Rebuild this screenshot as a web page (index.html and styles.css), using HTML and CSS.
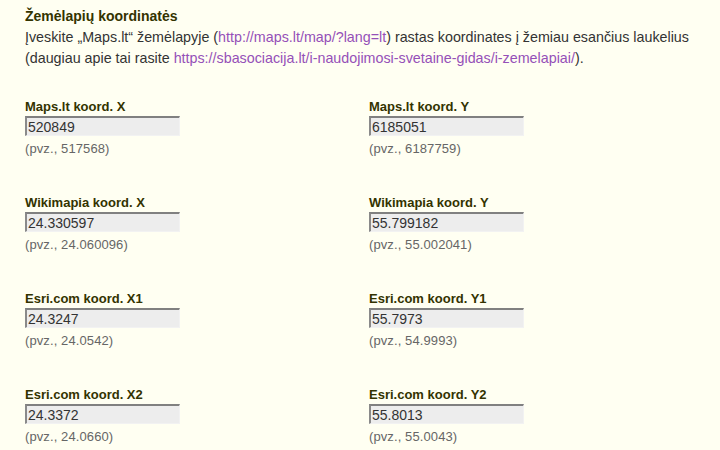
FILE: index.html
```html
<!DOCTYPE html>
<html lang="lt">
<head>
<meta charset="utf-8">
<link rel="stylesheet" href="styles.css">
</head>
<body>
<div class="page">
  <div class="intro">
    <div class="title">Žemėlapių koordinatės</div>
    <div class="text">Įveskite „Maps.lt“ žemėlapyje (<a href="#">http://maps.lt/map/?lang=lt</a>) rastas koordinates į žemiau esančius laukelius (daugiau apie tai rasite <a href="#">https://sbasociacija.lt/i-naudojimosi-svetaine-gidas/i-zemelapiai/</a>).</div>
  </div>
  <div class="grid">
    <div class="field"><div class="label">Maps.lt koord. X</div><input class="box" value="520849"><div class="hint">(pvz., 517568)</div></div>
    <div class="field"><div class="label">Maps.lt koord. Y</div><input class="box" value="6185051"><div class="hint">(pvz., 6187759)</div></div>
    <div class="field"><div class="label">Wikimapia koord. X</div><input class="box" value="24.330597"><div class="hint">(pvz., 24.060096)</div></div>
    <div class="field"><div class="label">Wikimapia koord. Y</div><input class="box" value="55.799182"><div class="hint">(pvz., 55.002041)</div></div>
    <div class="field"><div class="label">Esri.com koord. X1</div><input class="box" value="24.3247"><div class="hint">(pvz., 24.0542)</div></div>
    <div class="field"><div class="label">Esri.com koord. Y1</div><input class="box" value="55.7973"><div class="hint">(pvz., 54.9993)</div></div>
    <div class="field"><div class="label">Esri.com koord. X2</div><input class="box" value="24.3372"><div class="hint">(pvz., 24.0660)</div></div>
    <div class="field"><div class="label">Esri.com koord. Y2</div><input class="box" value="55.8013"><div class="hint">(pvz., 55.0043)</div></div>
  </div>
</div>
</body>
</html>
```
FILE: styles.css
```css
html, body {
  margin: 0;
  padding: 0;
  background: #fffff2;
}
body {
  font-family: "Liberation Sans", Arial, sans-serif;
  color: #333;
  overflow: hidden;
}
.page {
  padding: 5px 0 0 25px;
}
.title {
  font-weight: bold;
  font-size: 14px;
  line-height: 22px;
  color: #333300;
}
.text {
  font-size: 14.3px;
  line-height: 21px;
  width: 690px;
}
.text a {
  color: #9550b8;
  text-decoration: none;
}
.grid {
  display: grid;
  grid-template-columns: 344px 344px;
  grid-auto-rows: 96px;
  margin-top: 30px;
}
.field {
  display: flex;
  flex-direction: column;
  align-items: flex-start;
}
.label {
  font-weight: bold;
  font-size: 13px;
  line-height: 16px;
  color: #333300;
}
.box {
  box-sizing: border-box;
  width: 155px;
  height: 20px;
  margin: 1px 0 0 0;
  padding: 0 1px;
  font-family: "Liberation Sans", Arial, sans-serif;
  font-size: 14px;
  color: #333;
  background: #ededed;
  border-style: solid;
  border-width: 2px 1px 1px 2px;
  border-color: #808080 #f2f2f2 #f2f2f2 #8a8a8a;
  outline: none;
}
.hint {
  font-size: 13px;
  line-height: 16px;
  margin-top: 5px;
  letter-spacing: 0.1px;
  color: #666;
}
```
